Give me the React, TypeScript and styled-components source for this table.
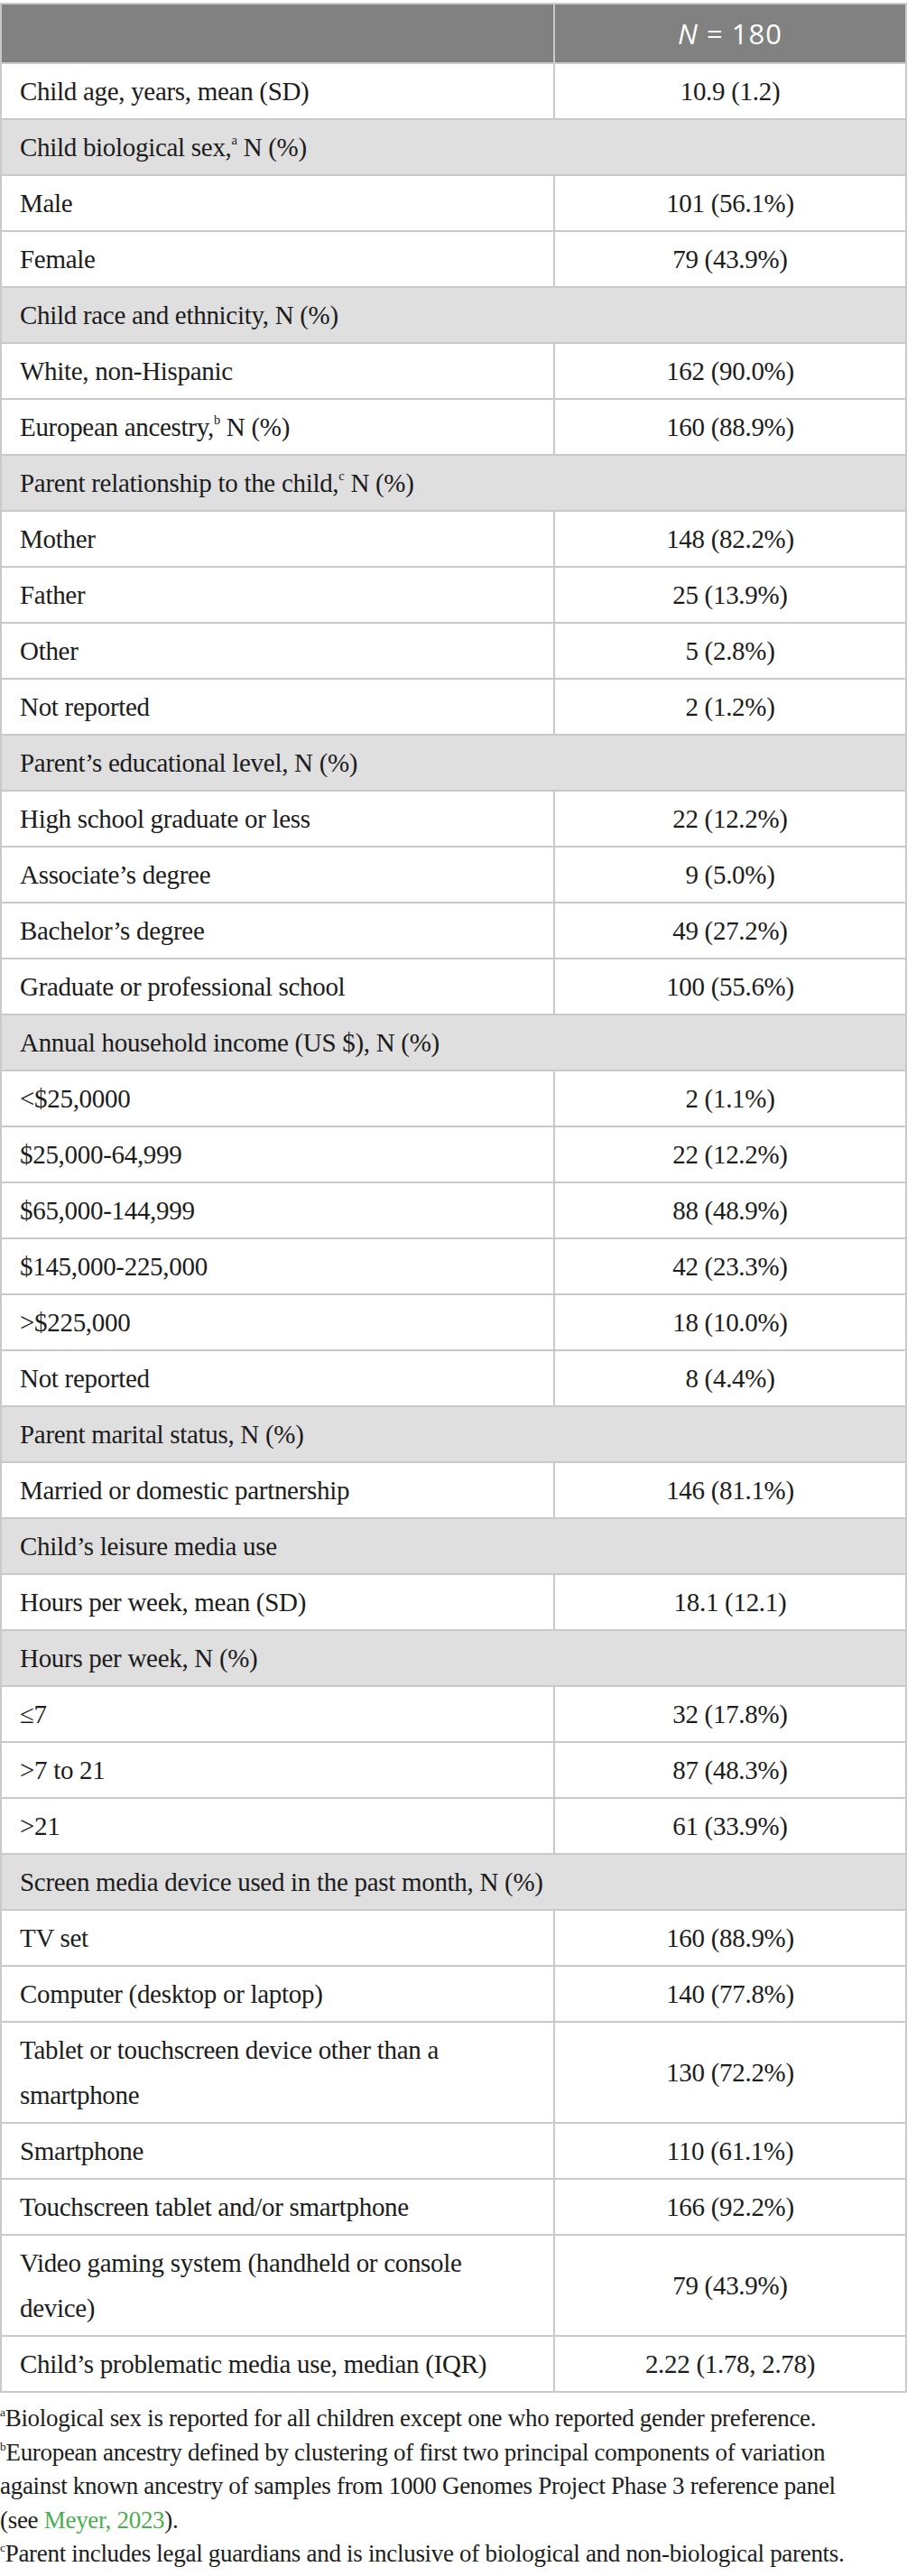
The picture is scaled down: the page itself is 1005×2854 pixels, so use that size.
import React from "react";
import styled, { createGlobalStyle } from "styled-components";

const GlobalStyle = createGlobalStyle`
  html, body {
    margin: 0;
    padding: 0;
    background: #ffffff;
  }
  body {
    font-family: "Liberation Serif", "Times New Roman", serif;
    color: #1c1c1c;
  }
`;

const Page = styled.div`
  width: 1005px;
  padding-top: 3px;
`;

const Table = styled.table`
  width: 1005px;
  border-collapse: collapse;
  table-layout: fixed;
  border: 2px solid #c9c9c9;
`;

const HeadCell = styled.th`
  background: #808180;
  color: #ffffff;
  font-family: "Open Sans", "Liberation Sans", sans-serif;
  font-weight: 400;
  font-size: 31px;
  letter-spacing: 1px;
  height: 64px;
  padding: 0;
  border: 2px solid #c9c9c9;
  text-align: center;

  i {
    font-style: italic;
  }
`;

const Cell = styled.td<{ $group?: boolean }>`
  font-size: 29px;
  letter-spacing: -0.3px;
  line-height: 50px;
  padding: 5px 20px;
  border: 2px solid #c9c9c9;
  background: ${(p) => (p.$group ? "#e0dfe0" : "#ffffff")};
  vertical-align: middle;
`;

const ValueCell = styled(Cell)`
  text-align: center;
`;

const Sup = styled.sup`
  font-size: 0.5em;
  vertical-align: 0.9em;
  line-height: 0;
`;

const Notes = styled.div`
  width: 962px;
  padding-top: 10px;
  font-size: 27px;
  letter-spacing: -0.3px;
  line-height: 37.5px;
`;

const Note = styled.p`
  margin: 0;
`;

const NoteMark = styled.sup`
  font-size: 0.5em;
  vertical-align: 0.8em;
  line-height: 0;
`;

const Ref = styled.a`
  color: #4cae4f;
  text-decoration: none;
`;

type Row = { label: React.ReactNode; value?: string; group?: boolean };

const rows: Row[] = [
  { label: "Child age, years, mean (SD)", value: "10.9 (1.2)" },
  { label: <>Child biological sex,<Sup>a</Sup> N (%)</>, group: true },
  { label: "Male", value: "101 (56.1%)" },
  { label: "Female", value: "79 (43.9%)" },
  { label: "Child race and ethnicity, N (%)", group: true },
  { label: "White, non-Hispanic", value: "162 (90.0%)" },
  { label: <>European ancestry,<Sup>b</Sup> N (%)</>, value: "160 (88.9%)" },
  { label: <>Parent relationship to the child,<Sup>c</Sup> N (%)</>, group: true },
  { label: "Mother", value: "148 (82.2%)" },
  { label: "Father", value: "25 (13.9%)" },
  { label: "Other", value: "5 (2.8%)" },
  { label: "Not reported", value: "2 (1.2%)" },
  { label: "Parent\u2019s educational level, N (%)", group: true },
  { label: "High school graduate or less", value: "22 (12.2%)" },
  { label: "Associate\u2019s degree", value: "9 (5.0%)" },
  { label: "Bachelor\u2019s degree", value: "49 (27.2%)" },
  { label: "Graduate or professional school", value: "100 (55.6%)" },
  { label: "Annual household income (US $), N (%)", group: true },
  { label: "<$25,0000", value: "2 (1.1%)" },
  { label: "$25,000-64,999", value: "22 (12.2%)" },
  { label: "$65,000-144,999", value: "88 (48.9%)" },
  { label: "$145,000-225,000", value: "42 (23.3%)" },
  { label: ">$225,000", value: "18 (10.0%)" },
  { label: "Not reported", value: "8 (4.4%)" },
  { label: "Parent marital status, N (%)", group: true },
  { label: "Married or domestic partnership", value: "146 (81.1%)" },
  { label: "Child\u2019s leisure media use", group: true },
  { label: "Hours per week, mean (SD)", value: "18.1 (12.1)" },
  { label: "Hours per week, N (%)", group: true },
  { label: "\u22647", value: "32 (17.8%)" },
  { label: ">7 to 21", value: "87 (48.3%)" },
  { label: ">21", value: "61 (33.9%)" },
  { label: "Screen media device used in the past month, N (%)", group: true },
  { label: "TV set", value: "160 (88.9%)" },
  { label: "Computer (desktop or laptop)", value: "140 (77.8%)" },
  { label: "Tablet or touchscreen device other than a smartphone", value: "130 (72.2%)" },
  { label: "Smartphone", value: "110 (61.1%)" },
  { label: "Touchscreen tablet and/or smartphone", value: "166 (92.2%)" },
  { label: "Video gaming system (handheld or console device)", value: "79 (43.9%)" },
  { label: "Child\u2019s problematic media use, median (IQR)", value: "2.22 (1.78, 2.78)" },
];

export default function App() {
  return (
    <Page>
      <GlobalStyle />
      <Table>
        <colgroup>
          <col style={{ width: 613 }} />
          <col />
        </colgroup>
        <thead>
          <tr>
            <HeadCell />
            <HeadCell>
              <i>N</i> = 180
            </HeadCell>
          </tr>
        </thead>
        <tbody>
          {rows.map((row, i) =>
            row.group ? (
              <tr key={i}>
                <Cell $group colSpan={2}>
                  {row.label}
                </Cell>
              </tr>
            ) : (
              <tr key={i}>
                <Cell>{row.label}</Cell>
                <ValueCell>{row.value}</ValueCell>
              </tr>
            )
          )}
        </tbody>
      </Table>
      <Notes>
        <Note>
          <NoteMark>a</NoteMark>Biological sex is reported for all children except one who reported gender preference.
        </Note>
        <Note>
          <NoteMark>b</NoteMark>European ancestry defined by clustering of first two principal components of variation
          against known ancestry of samples from 1000 Genomes Project Phase 3 reference panel (see{" "}
          <Ref href="#">Meyer, 2023</Ref>).
        </Note>
        <Note>
          <NoteMark>c</NoteMark>Parent includes legal guardians and is inclusive of biological and non-biological parents.
        </Note>
      </Notes>
    </Page>
  );
}
